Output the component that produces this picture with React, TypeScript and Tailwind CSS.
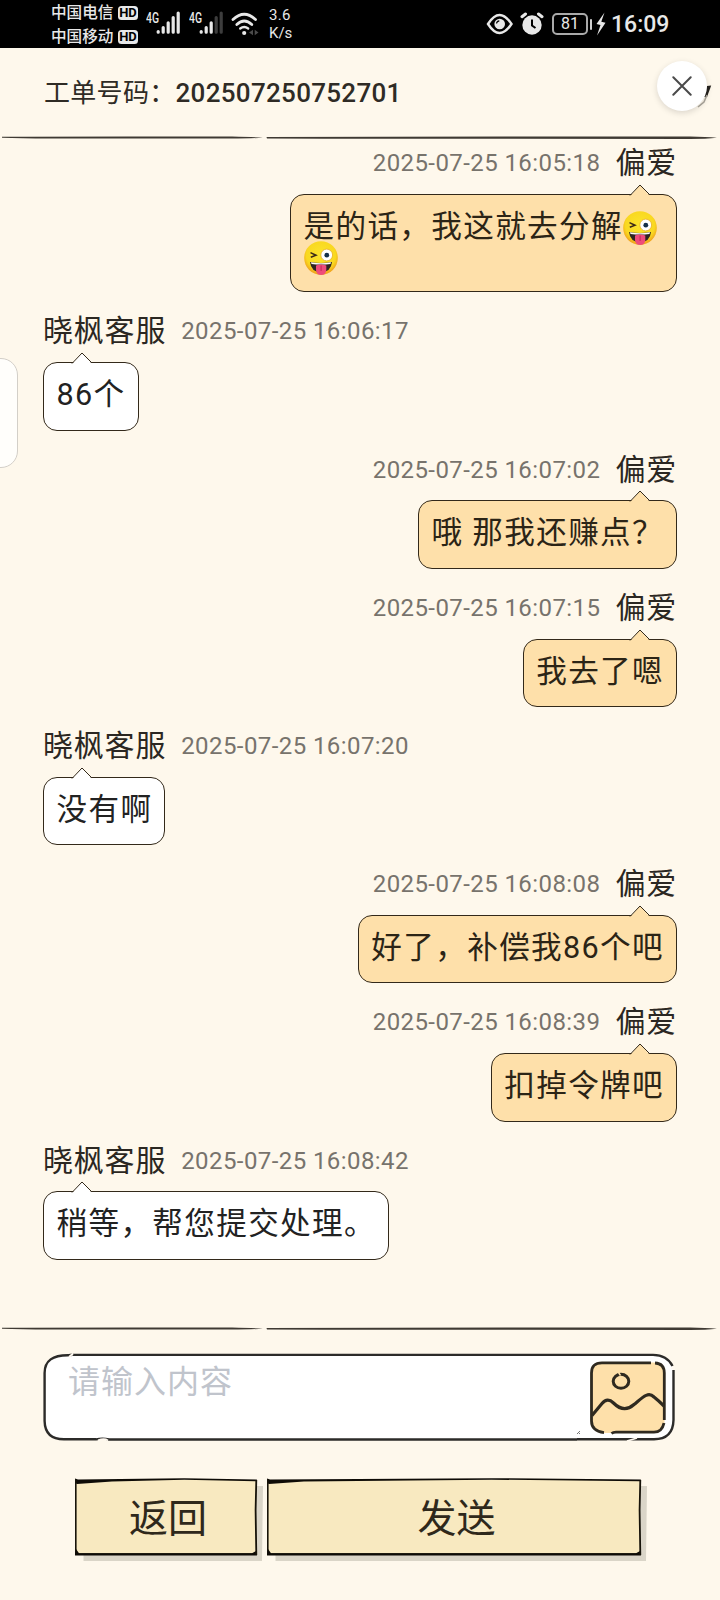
import React from "react";

type Message = {
  id: number;
  mine?: boolean;
  time: string;
  text: string;
  emojis?: boolean;
};

const messages: Message[] = [
  { id: 1, mine: true, time: "2025-07-25 16:05:18", text: "是的话，我这就去分解", emojis: true },
  { id: 2, time: "2025-07-25 16:06:17", text: "86个" },
  { id: 3, mine: true, time: "2025-07-25 16:07:02", text: "哦 那我还赚点？" },
  { id: 4, mine: true, time: "2025-07-25 16:07:15", text: "我去了嗯" },
  { id: 5, time: "2025-07-25 16:07:20", text: "没有啊" },
  { id: 6, mine: true, time: "2025-07-25 16:08:08", text: "好了，补偿我86个吧" },
  { id: 7, mine: true, time: "2025-07-25 16:08:39", text: "扣掉令牌吧" },
  { id: 8, time: "2025-07-25 16:08:42", text: "稍等，帮您提交处理。" },
];

function WinkEmoji() {
  return (
    <svg viewBox="0 0 34 34" className="-mt-[1px] -mb-1 inline-block h-[34px] w-[34px] align-top">
      <defs>
        <radialGradient id="face" cx="50%" cy="42%" r="58%">
          <stop offset="0" stopColor="#fbe52d" />
          <stop offset="0.75" stopColor="#f9d820" />
          <stop offset="1" stopColor="#ef9c1b" />
        </radialGradient>
      </defs>
      <circle cx="17" cy="17" r="16.8" fill="url(#face)" />
      <circle cx="22.7" cy="14" r="5.9" fill="#fff" stroke="#e9ad24" strokeWidth="0.8" />
      <circle cx="22.8" cy="14.2" r="2.4" fill="#16304a" />
      <path d="M6.5 11.6 L12 14.2 L6.8 16.2" fill="none" stroke="#3b2a18" strokeWidth="1.5" />
      <path d="M6 21 Q17 23.2 28 21 Q27 31 17 31 Q7 31 6 21Z" fill="#2e2422" />
      <path d="M7 21.3 Q17 23.2 27 21.3 L26.5 23 Q17 24.2 7.5 23Z" fill="#fff" />
      <path d="M12 24.4 Q17 22.6 22.3 24.4 V29 Q22 34 17.2 34 Q12.3 34 12 29Z" fill="#ee4b7a" />
      <path d="M17.1 24.5 V30" stroke="#bf2858" strokeWidth="1" />
    </svg>
  );
}

function Signal({ dim }: { dim?: boolean }) {
  return (
    <div className="flex h-[26px] items-start">
      <span className="origin-top-left scale-x-[.8] scale-y-110 text-[13px] leading-[14px] font-medium text-[#e8e8e8]">4G</span>
      <svg viewBox="0 0 24 24" className="-ml-[6px] h-6 w-6" strokeWidth="3.2" strokeLinecap="round">
        <path d="M2.2 20.6V21.2M7.2 16.5V21.2M12.2 11.8V21.2" stroke="#e8e8e8" />
        <path d="M17.2 6.5V21.2M22.2 2V21.2" stroke={dim ? "#3d3d3d" : "#e8e8e8"} />
      </svg>
    </div>
  );
}

function Carrier({ name }: { name: string }) {
  return (
    <div className="flex h-6 items-center">
      <span className="w-[67px] text-[15.6px] leading-6 font-medium text-[#e8e8e8]">{name}</span>
      <span className="flex h-[14px] w-[20px] items-center justify-center rounded-[3.5px] bg-[#e8e8e8] text-[13px] leading-[14px] font-bold text-black">
        HD
      </span>
    </div>
  );
}

function StatusBar() {
  return (
    <div className="flex h-12 shrink-0 items-center bg-black pl-[51px] text-[#e8e8e8]">
      <div className="flex w-[95px] flex-col pt-[1px]">
        <Carrier name="中国电信" />
        <Carrier name="中国移动" />
      </div>
      <div className="flex w-[43px]">
        <Signal />
      </div>
      <div className="flex w-[42px]">
        <Signal dim />
      </div>
      <svg viewBox="0 0 28 24" className="h-6 w-7" fill="none" stroke="#e8e8e8" strokeWidth="2.8" strokeLinecap="round">
        <path d="M2 7.5Q13.2 -3 24.5 7.5" />
        <path d="M5.8 12.5Q13.2 5.5 20.8 12.5" />
        <path d="M9.2 16.5Q13.2 13.4 17.2 16.5" strokeWidth="2.3" />
        <circle cx="13.2" cy="21" r="1.1" fill="#e8e8e8" strokeWidth="2" />
        <path d="M18 20.5l4-2.8v5.6zM27.5 20.5l-3.8-2.8v5.6z" fill="#4b4b4b" stroke="none" />
      </svg>
      <div className="ml-[10px] w-[60px] text-[15px] leading-[18px]">
        <div className="tracking-[.3px]">3.6</div>
        <div>K/s</div>
      </div>
      <svg viewBox="0 0 28 22" className="ml-[157px] h-[22px] w-7" fill="none" stroke="#e8e8e8">
        <path d="M2 11Q13.5 -7 25.5 11Q13.5 29 2 11Z" strokeWidth="2.4" />
        <circle cx="13.7" cy="11" r="5.3" fill="#e8e8e8" stroke="none" />
        <path d="M10.5 10.5Q10.8 8 13.3 7.8" stroke="#000" strokeWidth="1.2" />
      </svg>
      <svg viewBox="0 0 24 24" className="ml-[6px] h-6 w-6" fill="none">
        <circle cx="12" cy="13" r="9.7" fill="#e8e8e8" />
        <path d="M2 4.7L5.5 2M18.5 2L22 4.7" stroke="#e8e8e8" strokeWidth="3" strokeLinecap="round" />
        <path d="M12 7.5V13.5L15.5 16" stroke="#000" strokeWidth="2" />
      </svg>
      <div className="ml-[8px] flex h-[22px] w-9 items-center justify-center rounded-[5px] border-2 border-[#a9a9a9] text-[16px] leading-5">
        81
      </div>
      <div className="ml-[1.5px] h-[11px] w-[2.5px] rounded-sm bg-[#cfcfcf]" />
      <svg viewBox="0 0 10 24" className="ml-[4px] h-6 w-[10px]" fill="#e8e8e8">
        <path d="M8.5 .5L.5 12L4.5 13L1 23.5L9.5 10.8L5.3 9.8Z" />
      </svg>
      <div className="ml-[5px] pt-[2px] text-[23px] leading-6 font-medium">16:09</div>
    </div>
  );
}

function Divider() {
  return (
    <svg viewBox="0 0 720 4" className="block h-1 w-full shrink-0" fill="#3f3a33">
      <path d="M2 .8L7 .7L25 .8L130 .5H232Q252 .8 263 1.7Q252 2.4 230 2.6H50Q20 2.4 2 1.8Z" />
      <path d="M266.5 .9Q400 .6 550 .4H690Q706 .5 717 1.7Q706 2.9 690 2.9Q450 2.9 267 2.4Z" />
    </svg>
  );
}

function ChatMessage({ message }: { message: Message }) {
  const { mine, time, text, emojis } = message;
  return (
    <div className={mine ? "mb-[19px] flex flex-col items-end" : "mb-[19px] flex flex-col items-start"}>
      <div className={mine ? "mb-[10.7px] flex h-10 flex-row-reverse items-center gap-[15px]" : "mb-[10.7px] flex h-10 items-center gap-[15px]"}>
        <span className="text-[30px] leading-10 tracking-[.8px] text-[#2b2722]">{mine ? "偏爱" : "晓枫客服"}</span>
        <span className="text-[24px] leading-10 tracking-[.42px] text-[#77736c]">{time}</span>
      </div>
      <div
        className={
          "relative rounded-[14px] border border-[#33291a] pt-[17px] pb-[19.5px] pl-[12.5px] text-[30.6px] leading-[30px] tracking-[1.35px] whitespace-pre " +
          (mine ? "bg-[#fee0aa] text-[#2b2416] " : "bg-white text-[#222] ") +
          (emojis ? "w-[387px]" : "pr-[12px]")
        }
      >
        <svg
          viewBox="0 0 22 12"
          className={mine ? "absolute -top-[11px] right-[25px] h-3 w-[22px]" : "absolute -top-[11px] left-[27px] h-3 w-[22px]"}
        >
          <path d="M1 12L11 1L21 12Z" fill={mine ? "#fee0aa" : "#fff"} />
          <path d="M1 11.5L11 1L20.5 10.5" fill="none" stroke="#33291a" strokeWidth="1" />
        </svg>
        <div>
          {text}
          {emojis && <WinkEmoji />}
        </div>
        {emojis && (
          <div className="h-[30px]">
            <WinkEmoji />
          </div>
        )}
      </div>
    </div>
  );
}

function PictureIcon() {
  return (
    <svg viewBox="0 0 76 74" className="h-[74px] w-[76px]" fill="none" stroke="#2f2a20" strokeWidth="2.8">
      <rect x="1.5" y="1.5" width="73" height="70.5" rx="11" fill="#fee0aa" stroke="none" />
      <path d="M61 1.8H12Q1.5 1.8 1.5 12V60Q1.5 70 14 71.6" />
      <path d="M65 2Q74.3 2.5 74.3 12V59" />
      <path d="M74 62Q72 71.2 64 71.2H26Q23 71.2 21.5 72.5" />
      <ellipse cx="31" cy="20.3" rx="7.8" ry="7" strokeWidth="3" />
      <path d="M28.5 11.5L30.5 14.5" stroke="#fee0aa" strokeWidth="1.5" />
      <path d="M2 54.5L12 42.5Q17.5 36 23.5 42Q34 52.5 44 43.5C52 37 58 30 64 36Q69 40 74 45" strokeWidth="3.2" />
    </svg>
  );
}

function InputBox() {
  return (
    <div className="relative mx-[43px] mt-[21.5px] flex h-[88px] w-[632px]">
      <svg viewBox="0 0 632 88" className="absolute inset-0 h-full w-full" fill="none" stroke="#2c2b29" strokeWidth="2.4">
        <rect x="1.5" y="1.5" width="629" height="85" rx="18" fill="#fff" stroke="none" />
        <path d="M29 1.8L26 2.2Q1.6 1.7 1.6 20V68Q2 86.3 21 86.3H53Q60 84.8 66 86.5H534" />
        <path d="M29.5 1.9H610Q624 2 629.5 13" />
        <path d="M630.5 17V67Q630 86.2 611 86.3H560L534 86.3" />
        <path d="M26 4L30 .5M55 87.4Q61 85 65 87.4M584 88L594 85M628 15.3H632" stroke="#fff9f0" strokeWidth="1.8" />
        <path d="M534 81L537 78M536 81L537 80" stroke="#555" strokeWidth="0.8" />
      </svg>
      <div className="relative flex-1 pt-[9px] pl-[25px] text-[32px] leading-[40px] tracking-[1px] text-[#c0c4cc]">请输入内容</div>
      <div className="relative mt-[8px] mr-[9.5px]">
        <PictureIcon />
      </div>
    </div>
  );
}

function SketchButton({ label, wide }: { label: string; wide?: boolean }) {
  const w = wide ? 374 : 182;
  return (
    <button className={wide ? "relative h-[84px] w-[382px]" : "relative h-[84px] w-[192px]"}>
      <svg viewBox={"0 0 " + (w + 8) + " 84"} className={wide ? "absolute top-0 left-0 h-[84px] w-[382px]" : "absolute top-0 left-0 h-[84px] w-[190px]"}>
        <path d={`M8.5 8H${w + 6}L${w + 5} 83H8.5Z`} fill="#dad5c8" />
        <path d={`M1 2L${w - 1} 2V77H1Z`} fill="#f8e9c0" />
        <path d={`M0 .5L3 1.5L${w * 0.6} .2L${w} 1.5L${w - 1} 3.2L${w * 0.6} 1.7L37 3.4L2 6L0 5Z`} fill="#0e0b06" />
        <path d={`M.7 1V76.2H${w - 0.5}`} fill="none" stroke="#171309" strokeWidth="1.8" />
        <path d={`M1 71L4 75.3H${w - 5}L${w - 1} 73L${w} 77.5H0Z`} fill="#0e0b06" />
        <path d={`M${w - 0.7} 2L${w - 1.4} 32L${w - 0.7} 77`} fill="none" stroke="#171309" strokeWidth="1.8" />
      </svg>
      <span className={wide ? "relative block h-[78px] w-[379px] text-[39px] leading-[76px] text-[#2f281b]" : "relative block h-[78px] w-[186px] text-[39px] leading-[76px] text-[#2f281b]"}>
        {label}
      </span>
    </button>
  );
}

export default function App() {
  return (
    <div className="relative flex h-[1600px] w-[720px] flex-col overflow-hidden bg-[#fef8ec] font-[Roboto,'Noto_Sans_CJK_SC',sans-serif]">
      <StatusBar />
      <header className="flex h-[88px] shrink-0 items-center pt-[3px] pl-[44px] text-[26px] text-[#2f2b25]">
        <span className="tracking-[.3px]">工单号码：</span>
        <span className="font-medium tracking-[.3px]">202507250752701</span>
      </header>
      <Divider />

      <main className="flex-1 overflow-hidden px-[43px] pt-[3.3px]">
        {messages.map((m) => (
          <ChatMessage key={m.id} message={m} />
        ))}
      </main>

      <footer className="flex h-[273px] shrink-0 flex-col">
        <Divider />
        <InputBox />
        <div className="mt-[37.5px] flex pl-[75px]">
          <SketchButton label="返回" />
          <SketchButton label="发送" wide />
        </div>
      </footer>

      <div className="absolute top-[358px] -left-5 h-[110px] w-[38px] rounded-[17px] border border-[#d3cfc8] bg-[#fffefb]" />

      <svg viewBox="0 0 16 24" className="absolute top-[85px] left-[696px] h-6 w-4">
        <path d="M11 1L15.2 .5L11 12L8 12Z" fill="#25221e" />
        <path d="M11 10L8 17L2 22" fill="none" stroke="#aaa59b" strokeWidth="1.5" />
      </svg>
      <button className="absolute top-[61px] left-[657px] flex h-[50px] w-[50px] items-center justify-center rounded-full bg-white shadow-[0_2px_6px_rgba(0,0,0,0.14)]">
        <svg viewBox="0 0 20 20" className="h-5 w-5" stroke="#4a4a4a" strokeWidth="2" strokeLinecap="round">
          <path d="M1.3 1.3L18.7 18.7M18.7 1.3L1.3 18.7" />
        </svg>
      </button>
    </div>
  );
}
